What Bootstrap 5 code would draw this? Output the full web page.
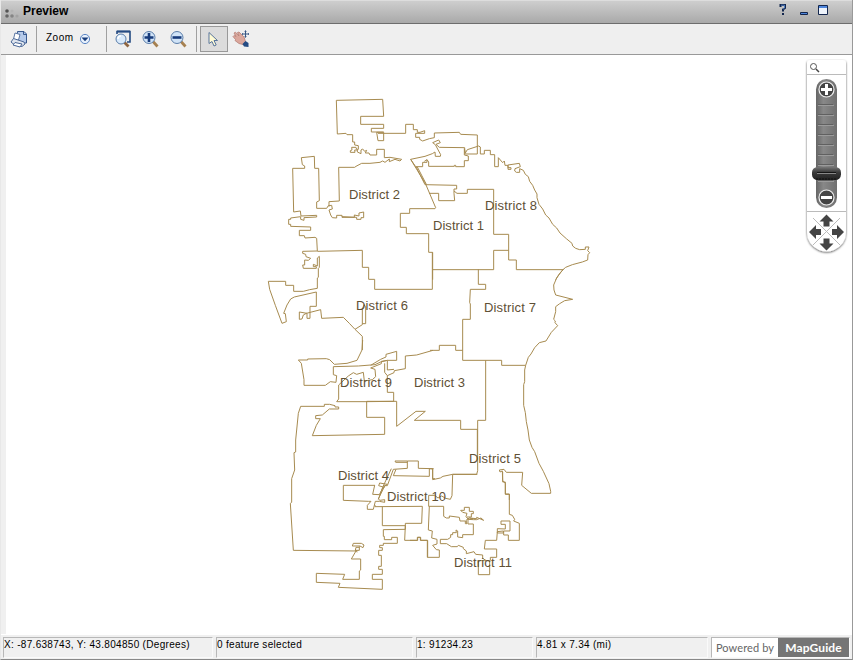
<!DOCTYPE html>
<html lang="en">
<head>
<meta charset="utf-8">
<meta name="viewport" content="width=device-width, initial-scale=1">
<title>Preview</title>
<link href="https://cdn.jsdelivr.net/npm/bootstrap@5.3.0/dist/css/bootstrap.min.css" rel="stylesheet">
<style>
body{width:854px;height:660px;overflow:hidden;background:#fff;font-family:"Liberation Sans",Arial,sans-serif;color:#000;line-height:1}
.viewer{width:853px;height:660px;border-right:1px solid #999;border-left:1px solid #e8e8e8;border-bottom:1px solid #888;background:#efefef}
.titlebar{height:24px;background:linear-gradient(#cecece,#a9a9a9);border-bottom:1px solid #6d6d6d;border-top:1px solid #ddd;padding-left:4px;font-size:12px;font-weight:bold}
.titlebar svg,.tools svg{display:block}
.wname{margin-bottom:2px}
.wbtns{margin-right:23px;margin-bottom:4px}
.tools{height:31px;border-bottom:1px solid #999;font-size:10px;letter-spacing:.5px}
.tools>div{height:26px}
.printbtn{width:35px}
.zoommenu{width:69px;padding-left:9px}
.zoomlabel{margin-bottom:2px}
.zoommenu svg{margin-left:5px}
.zoomset{width:89px;padding-left:7px;padding-right:9px}
.sep{width:1px;background:#a0a0a0}
.seplast{margin-right:3px}
.pressed{width:28px;border:1px solid #999;background:#dcdcdc}
.hand{margin-left:4px}
.mapview{height:580px;background:#fff}
.mapview>svg{display:block}
.rim{width:5px;height:579px;background:#f0f0f0}
.outline{fill:none;stroke:#a78b50;stroke-width:1;stroke-linejoin:miter}
.outline path{vector-effect:non-scaling-stroke}
.names{font-size:13px;fill:#5f5035}
.pan{right:4px;top:4px}
.statusbar{height:24px;padding:2px 0 0 2px;gap:3px;background:#f0f0f0;font-size:10px;letter-spacing:.31px}
.cell{height:21px;border-top:1px solid #b8b8b8;border-left:1px solid #b8b8b8;border-bottom:1px solid #fafafa;border-right:1px solid #fafafa;padding-top:2px;white-space:nowrap;flex:none}
.c1{width:210px}.c2{width:197px}.c3{width:117px}.c4{width:172px}.c5{width:139px;padding:0}
.brand{font-family:Lato,"Open Sans",sans-serif;font-size:12px;letter-spacing:.1px}
.pw{width:66px;background:#fff;color:#666;font-size:11px}
.mg{background:#757575;color:#fff;font-weight:700}
</style>
</head>
<body>
<div class="viewer d-flex flex-column">
 <header class="titlebar d-flex align-items-center flex-shrink-0">
  <svg width="18" height="20"><circle cx="2" cy="9" r="1.8" fill="#555"/><circle cx="2" cy="14" r="1.8" fill="#666"/><circle cx="7" cy="14" r="1.8" fill="#858585"/><circle cx="12" cy="14" r="1.6" fill="#a3a3a3"/><circle cx="7" cy="9" r="1.5" fill="#b4b4b4"/></svg>
  <span class="wname">Preview</span>
  <svg class="wbtns ms-auto" width="50" height="18" viewBox="0 0 50 18"><path d="M1.500 6V4h4.500v3L4 8.500v2M4 12v2" fill="none" stroke="#13264d" stroke-width="2"/><path d="M2 4.200h3.500V7L4 8.200" fill="none" stroke="#6aa0ee" stroke-width=".7"/><path d="M21.500 11.500h7v2h-7z" fill="#4f86dc" stroke="#13264d"/><path d="M39.500 4.500h9v9h-9z" fill="#eef3fb" stroke="#13264d"/><path d="M40 5h8v2h-8z" fill="#4f86dc"/></svg>
 </header>
 <nav class="tools d-flex align-items-center flex-shrink-0">
  <div class="printbtn d-flex align-items-center justify-content-center"><svg width="18" height="18" viewBox="0 0 18 18"><path d="M7.500 1.500H14L16.500 4v9H12L7 9z" fill="#b5caea" stroke="#38598f"/><path d="M13.500 1.500v3h3" fill="none" stroke="#38598f"/><path d="M3.500 9l1.500-6 5 1.500L8.500 10" fill="#fff" stroke="#5b76a3"/><path d="M1 12l2.500-3.500L14 12l1 2-3 2.500-8-2z" fill="#dfe5ee" stroke="#4b6897"/><path d="M3 15l2-2.500 7 1.500-2 3z" fill="#fff" stroke="#4b6897"/></svg></div>
  <div class="sep"></div>
  <div class="zoommenu d-flex align-items-center"><span class="zoomlabel">Zoom</span><svg width="12" height="12" viewBox="0 0 12 12"><circle cx="6" cy="6" r="4.600" fill="#e8f1fc" stroke="#5c86c5"/><path d="M2.500 4.500h7L6 8.200z" fill="#173d7c"/></svg></div>
  <div class="sep"></div>
  <div class="zoomset d-flex align-items-center justify-content-between">
   <svg width="17" height="18" viewBox="0 0 17 18"><path d="M3 4V1.500h13V12h-3" fill="none" stroke="#254b83" stroke-width="1.600"/><path d="M3 1.500h13" stroke="#254b83" stroke-width="2"/><path d="M10.500 12.500l4 4" stroke="#8e6541" stroke-width="2.800"/><circle cx="7" cy="9" r="5" fill="#d9eafb" stroke="#5a7da9"/><path d="M4 9a3 3 0 013-3" fill="none" stroke="#fff" stroke-width="1.500"/></svg>
   <svg width="17" height="18" viewBox="0 0 17 18"><path d="M11 11.500l4.500 5" stroke="#a68151" stroke-width="2.800"/><circle cx="7" cy="7.500" r="6" fill="#d0e3f7" stroke="#5a7da9"/><path d="M2.500 7.500h9M7 3v9" stroke="#173b7b" stroke-width="2.600"/></svg>
   <svg width="17" height="18" viewBox="0 0 17 18"><path d="M11 11.500l4.500 5" stroke="#a68151" stroke-width="2.800"/><circle cx="7" cy="7.500" r="6" fill="#d0e3f7" stroke="#5a7da9"/><path d="M2.500 7.500h9" stroke="#173b7b" stroke-width="2.600"/></svg>
  </div>
  <div class="sep seplast"></div>
  <div class="pressed d-flex align-items-center justify-content-center"><svg width="12" height="17" viewBox="1 0 12 17"><path d="M2 1.500v11l3-2 2 4.500 2.200-1L7 9.500h3.500z" fill="#fffbd5" stroke="#58759c"/></svg></div>
  <svg class="hand" width="20" height="20" viewBox="0 0 20 20"><path d="M2 4l1.500-.8L7 7 5.500 3.500 7 3l5 5 1.500 4.500-2.500 3-4-1-4-3 .5-1L1 7.500l1-1 2 1z" fill="#dba79c" stroke="#b57f76" stroke-width=".8"/><path d="M10.500 15l3-3 3 2v4l-4.500-.5z" fill="#244b83"/><path d="M13.500 2v6M10.500 5h6" stroke="#365684"/><path d="M12.500 2.500l1-1 1 1M12.500 7.500l1 1 1-1M11 4l-1 1 1 1M16 4l1 1-1 1" fill="none" stroke="#365684" stroke-width=".8"/></svg>
 </nav>
 <main class="mapview position-relative d-flex flex-shrink-0">
  <div class="rim"></div>
  <svg width="796" height="580" viewBox="6 55 796 580">
   <g class="outline">
    <g transform="translate(260 90) scale(.333333)">
     <path d="M354 152L350 127H371V152H354M371 126H334V115H371V103H302V79H371L368 28L229 31L232 132L258 130L261 134H278V156H284V165L295 167V178H290L288 172H275L276 180L271 182V187H285L284 180H292V186L303 191V180L308 177L314 184L320 181L316 189L327 189L330 195H350V178H373V203L390 202L425 208L420 213L405 208L388 215L388 207L375 217L368 213L360 217L330 220H305L288 229L284 232H236L238 333L207 335V350"/>
     <path d="M354 130H437V103H460V119H472V127H480L494 122V130H467V142H479V148L488 153L508 146"/>
     <path d="M134 228L127 224L124 203L163 199L164 235H176L178 332L170 336V355H200L205 347L215 346L217 357L207 360L212 375L217 383L230 384V376H246V382H283V375L297 378V369L311 366V383H303V388H290V382L246 380"/>
     <path d="M134 228V235H98L101 366L121 363L123 378L170 376V381L132 383V391L122 388V380L92 384V388H86V403"/>
    </g>
    <g transform="translate(400 110) scale(.333333)">
     <path d="M88 86L103 83V69L178 67L182 73L232 75V132H195L194 113L118 112L108 103L121 98L116 90L98 98L106 104L122 134L121 139H106L105 126L97 131L75 139L32 148L44 168L76 220L107 293L105 296H29V310H1V352H19V371H86V427H98V509M32 148L47 170H68V157H81V149L73 154M81 149L86 156V169H163V166H167V170H193V152H205V138L193 135V116L196 129L202 119L236 108L241 111V132H253V121H271V134H284V170H295V143L308 158L313 153L315 166H324V178H333V173H324V165L358 160L361 170L345 176L344 183L349 187H359V176L370 181L376 193L385 200L389 214L398 226L404 240L411 252V263L417 283L428 297L437 315L447 324L458 343L470 354L480 369L499 386L516 400L518 408L527 415L539 419L556 418V411H567L563 422L569 428L564 434L563 450L547 456L517 464L497 472L489 479L476 495L467 509"/>
     <path d="M48 170L75 224L170 226V237H162V250L164 272H116V250H87M162 243L171 250H202V238H281V373H326V450H349V479H489M98 479H281V421H326"/>
     <path d="M52 171L79 223"/>
    </g>
    <g transform="translate(260 200) scale(.333333)">
     <path d="M86 73H92V79L152 81V91H118V107H133L135 114L165 112L170 115L172 153L128 154V160L137 163L138 170L152 175L145 181L134 180V195H128L130 205H169V200H160V193L172 198V174L178 169V202L175 205V232L172 234V265L149 269L130 274H101V256H77V244H25L29 268L46 316L66 370L79 365L76 341L71 340L81 315L92 297L103 291L169 276V319H150V355H141V340L118 336V358L126 357L130 345L139 340L182 329L185 355L250 352L268 370L285 388L307 409V450"/>
     <path d="M172 154L307 151V202H326V238H344V268H517V157M285 388L307 374V328L312 314L317 320V371H307"/>
    </g>
    <g transform="translate(430 260) scale(.333333)">
     <path d="M145 28V73H167V88H121L119 128L121 132V178H98V301H215V316H287M400 28L391 38L380 54L371 75L372 90L377 105L428 118L404 122L389 131L377 140V155L371 178L376 183L375 188L383 197L364 217L348 243L328 248L314 263L303 282L295 292L287 316L284 330V365L281 374V436L286 458L289 485L294 510L298 540L306 562L314 575L327 610L340 634L357 671L362 694V700H304L275 676L278 637H229L222 628L208 630L210 636L217 633L218 661L226 671V702H238V720"/>
     <path d="M0 271H28V256H77V271H98M167 301V481H143V632L140 643H68"/>
    </g>
    <g transform="translate(285 340) scale(.333333)">
     <path d="M233 0L231 30L216 61L186 70L148 73L134 59L124 56L68 57V60H40L49 70L57 119V136H121L136 125L153 127L155 107L145 104V80L220 78L270 74L287 66L307 61M257 76L287 58L303 51V43L335 34V61H307V90L327 88M257 84L270 88L272 110L262 119L238 123L235 97L215 103L205 98L190 108L161 135V177L155 185H243L326 184V157H307V107L327 98L328 92L361 86V48L395 45L444 31M257 84L289 71V64L307 61"/>
     <path d="M307 107L299 97V70M161 207V201H150V197L134 193H118V199H47L40 220L32 300M161 207H133L112 225L92 227V236H106L94 256L82 287L299 283V232H245V184H335V259L393 214H421L388 241H527V268H577V360"/>
    </g>
    <g transform="translate(285 440) scale(.333333)">
     <path d="M32 0V36L27 38L29 90L20 116V187L16 190L25 331L213 333L199 357H227V390L223 393V418H173L179 403L94 400V427L165 430L160 442L292 448V418H262V403H292V388H281V379H289V346H281V331H292V323H284V316H295V310H337V292H320V299H298V289H295V269L361 268V250H410L412 199L270 200V195M292 200V257H361L359 301H397V292H406V301H428V352"/>
     <path d="M270 136H175V181L251 184H258L247 196V208H265L271 184H283L299 187V179L285 181L280 177L297 142L281 137L284 129L307 133L295 141L283 164L263 163L269 136M298 143V137H307L325 88L367 85V63H330L332 67H367M367 63H400V85L446 86M333 88L325 107L433 109V86L443 87V116H450M280 178L293 142L319 86"/>
     <path d="M205 310H229L237 315L234 323L225 318L202 318L205 310M223 319V331H211L216 337M218 333L211 331L213 322H223"/>
    </g>
    <g transform="translate(410 450) scale(.333333)">
     <path d="M68 56V89L91 84L99 79L128 73H202M128 73L126 137L121 148L107 145L95 138L84 144L74 136H56V169H101V199L109 204H118V198L148 202L150 213H166V221H171L168 211L178 204L200 206V202L221 211L213 204L200 209H190L174 208V222H190V254H158V263L143 261V243L138 240L139 248H128V254H122V262L113 268H91V281H110L124 290H142L145 286L160 292V296L169 303V311L192 305L197 313L218 315V325L229 332H239V374H205V332H229"/>
     <path d="M174 207L168 200L171 190L158 187L152 181H163V172H178V184H190V191H184V201H171M178 204L190 206"/>
     <path d="M58 169L55 240L67 243L65 264L81 268V282L68 286L79 299L88 300L88 322H52V271H32V262H23V271H0M278 66V96H286V133H298V193L307 196L314 208L311 213L328 220V271H295V255H281V243H300V213H273V223H286V237L262 236V249H280V243L262 245L260 271H226L223 297H260V322H241V332"/>
    </g>
   </g>
   <g class="names">
    <text x="349" y="199" textLength="51">District 2</text><text x="433" y="230" textLength="51">District 1</text><text x="485" y="210" textLength="52">District 8</text><text x="356" y="310" textLength="52">District 6</text><text x="484" y="312" textLength="52">District 7</text><text x="414" y="387" textLength="51">District 3</text><text x="340" y="387" textLength="52">District 9</text><text x="469" y="463" textLength="52">District 5</text><text x="338" y="480" textLength="51">District 4</text><text x="387" y="501" textLength="59">District 10</text><text x="454" y="567" textLength="58">District 11</text>
   </g>
  </svg>
  <svg class="pan position-absolute" width="44" height="200" viewBox="804 59 44 200">
   <defs><linearGradient id="bar"><stop stop-color="#666"/><stop offset=".35" stop-color="#888"/><stop offset="1" stop-color="#707070"/></linearGradient><linearGradient id="knob" x2="0" y2="1"><stop stop-color="#777"/><stop offset=".4" stop-color="#3b3b3b"/><stop offset="1" stop-color="#222"/></linearGradient><filter id="sh" x="-20%" width="140%"><feDropShadow dx="0" dy="1" stdDeviation="1.300" flood-opacity=".65"/></filter></defs>
   <path d="M807 63q0-3 3-3h33q3 0 3 3v169q0 12-12 18-7 3-15 0-12-6-12-18z" fill="#fff" filter="url(#sh)"/>
   <path d="M807 74.500h39M807 211.500h39" stroke="#bbb"/>
   <circle cx="813.500" cy="66.500" r="3" fill="none" stroke="#555"/><path d="M816 69l3 3" stroke="#444" stroke-width="1.500"/>
   <rect x="816" y="79" width="21" height="129" rx="10.500" fill="url(#bar)"/>
   <path d="M818 104.500h15m-15 10h15m-15 10h15m-15 10h15m-15 10h15m-15 10h15m-15 10h15m-15 16h15" stroke="#606060"/><path d="M818 105.500h16m-16 10h16m-16 10h16m-16 10h16m-16 10h16m-16 10h16m-16 10h16m-16 16h16" stroke="#9b9b9b"/>
   <circle cx="826.500" cy="89.500" r="7.500" fill="#444" stroke="#eee" stroke-width="1.200"/><circle cx="826.500" cy="197.500" r="7.500" fill="#444" stroke="#eee" stroke-width="1.200"/>
   <path d="M821 89.500h11M826.500 84v11M821 197.500h11" stroke="#fff" stroke-width="3"/>
   <rect x="812" y="167" width="29" height="13" rx="5.500" fill="url(#knob)"/><path d="M817 172.500h19" stroke="#151515"/><path d="M817 173.500h19" stroke="#888"/><path d="M816 179h21" stroke="#111" stroke-dasharray="2 1"/>
   <path d="M813 218l27 27M840 218l-27 27" stroke="#bbb"/>
   <g fill="#444"><path id="ar" d="M826.500 214.500l7 7h-4v5h-6v-5h-4z"/><use href="#ar" transform="rotate(90 826.500 232)"/><use href="#ar" transform="rotate(180 826.500 232.500)"/><use href="#ar" transform="rotate(270 826.500 232)"/></g>
  </svg>
 </main>
 <footer class="statusbar d-flex flex-shrink-0">
  <div class="cell c1">X: -87.638743, Y: 43.804850 (Degrees)</div>
  <div class="cell c2">0 feature selected</div>
  <div class="cell c3">1: 91234.23</div>
  <div class="cell c4">4.81 x 7.34 (mi)</div>
  <div class="cell c5 brand d-flex"><div class="pw d-flex align-items-center justify-content-center">Powered by</div><div class="mg flex-fill d-flex align-items-center justify-content-center">MapGuide</div></div>
 </footer>
</div>
<script src="https://cdn.jsdelivr.net/npm/bootstrap@5.3.0/dist/js/bootstrap.bundle.min.js"></script>
</body>
</html>
